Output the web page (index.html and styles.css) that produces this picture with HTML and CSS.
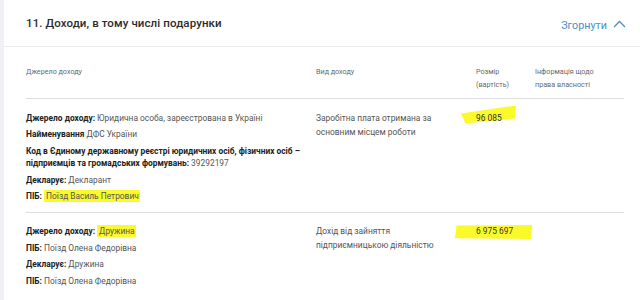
FILE: index.html
```html
<!DOCTYPE html>
<html lang="uk">
<head>
<meta charset="utf-8">
<title>Доходи, в тому числі подарунки</title>
<link rel="stylesheet" href="styles.css">
</head>
<body>
<section class="card">
  <header class="card-head">
    <h2 class="card-title">11. Доходи, в тому числі подарунки</h2>
    <button class="toggle" type="button">Згорнути
      <svg class="chev" width="13" height="8" viewBox="0 0 13 8"><polyline points="1,7 6.5,1.5 12,7" fill="none" stroke="currentColor" stroke-width="1.3"/></svg>
    </button>
  </header>

  <div class="table">
    <div class="row thead">
      <div class="cell">Джерело доходу</div>
      <div class="cell">Вид доходу</div>
      <div class="cell">Розмір<br>(вартість)</div>
      <div class="cell">Інформація щодо<br>права власності</div>
    </div>

    <div class="row tbody">
      <div class="cell info">
        <p><b>Джерело доходу:</b> Юридична особа, зареєстрована в Україні</p>
        <p><b>Найменування</b> ДФС України</p>
        <p><b>Код в Єдиному державному реєстрі юридичних осіб, фізичних осіб – підприємців та громадських формувань:</b> 39292197</p>
        <p><b>Декларує:</b> Декларант</p>
        <p><b>ПІБ:</b> <mark class="hl">Поїзд Василь Петрович</mark></p>
      </div>
      <div class="cell kind">Заробітна плата отримана за основним місцем роботи</div>
      <div class="cell amount"><span class="sum"><span class="marker slant"></span>96 085</span></div>
      <div class="cell"></div>
    </div>

    <div class="row tbody last">
      <div class="cell info">
        <p><b>Джерело доходу:</b> <mark class="hl">Дружина</mark></p>
        <p><b>ПІБ:</b> Поїзд Олена Федорівна</p>
        <p><b>Декларує:</b> Дружина</p>
        <p><b>ПІБ:</b> Поїзд Олена Федорівна</p>
      </div>
      <div class="cell kind">Дохід від зайняття підприємницькою діяльністю</div>
      <div class="cell amount"><span class="sum"><span class="marker wide"></span>6 975 697</span></div>
      <div class="cell"></div>
    </div>
  </div>
</section>
</body>
</html>
```

FILE: styles.css
```css
html, body {
  margin: 0;
  padding: 0;
}

body {
  background: #f0f1f5;
  font-family: Roboto, "Noto Sans", "Liberation Sans", sans-serif;
  color: #333;
  height: 300px;
  overflow: hidden;
}

.card {
  margin-left: 4px;
  background: #fff;
  min-height: 300px;
}

.card-head {
  height: 46px;
  border-bottom: 1px solid #e9eaee;
  display: flex;
  align-items: center;
  justify-content: space-between;
  padding: 0 14px 0 22px;
}

.card-title {
  margin: 0;
  font-size: 11.5px;
  font-weight: 500;
  color: #2b2b2b;
  letter-spacing: 0.1px;
}

.toggle {
  border: 0;
  background: none;
  padding: 0;
  margin-top: 4px;
  font-family: inherit;
  font-size: 10.8px;
  color: #4a8ec6;
  display: flex;
  align-items: center;
  gap: 6px;
  cursor: pointer;
}

.chev {
  display: block;
  margin-top: -3px;
}

.table {
  padding: 0 16px 0 22px;
}

.row {
  display: grid;
  grid-template-columns: 290px 160px 59px 1fr;
  border-bottom: 1px solid #dcdde1;
}

.row.last {
  border-bottom: 0;
}

.thead {
  padding: 18px 0 7px;
  font-size: 7.2px;
  line-height: 13px;
  color: #6a6a6a;
}

.tbody {
  padding: 12.5px 0 5px;
  font-size: 8.4px;
  line-height: 12.5px;
}

.info p {
  margin: 0 0 4px;
  color: #555;
}

.info b {
  color: #222;
  font-weight: 700;
}

.kind {
  color: #555;
  line-height: 14px;
  margin-top: -1px;
  padding-right: 30px;
}

.amount {
  color: #333;
}

.sum {
  position: relative;
  display: inline-block;
  z-index: 0;
}

.hl {
  background: #fafa2a;
  color: #555;
  padding: 1px 1px 1px 2px;
}

/* marker strokes drawn behind the sums */
.marker {
  position: absolute;
  z-index: -1;
  background: #fafa2a;
}

.marker.slant {
  left: -15px;
  top: -6px;
  width: 55px;
  height: 18px;
  clip-path: polygon(0 44%, 100% 0, 98% 72%, 8% 100%);
}

.marker.wide {
  left: -21px;
  top: 0;
  width: 77px;
  height: 14px;
  clip-path: polygon(2% 4%, 100% 0, 99% 100%, 0 94%);
}
```
